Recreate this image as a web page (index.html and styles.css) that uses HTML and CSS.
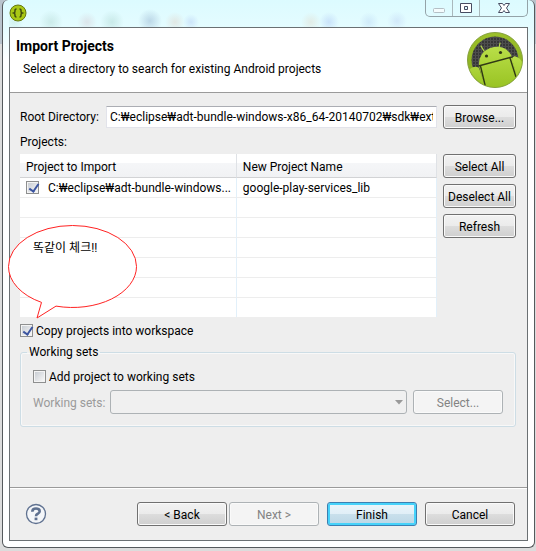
FILE: index.html
```html
<!DOCTYPE html>
<html lang="en">
<head>
  <meta charset="UTF-8" />
  <meta name="viewport" content="width=device-width, initial-scale=1.0" />
  <title>Import Projects</title>
  <link rel="stylesheet" href="styles.css">
</head>
<body>

  <div class="window">

    <!-- Title bar -->
    <div class="titlebar">
      <svg class="app-icon" width="18" height="18" viewBox="0 0 18 18">
        <circle cx="9" cy="9" r="8" fill="#a9c815" stroke="#66790f" stroke-width="1" />
        <path d="M7.5 5Q5.800 5 6 6.800Q6.200 8.500 4.800 9Q6.200 9.500 6 11.200Q5.800 13 7.500 13M10.500 5Q12.200 5 12 6.800Q11.800 8.500 13.200 9Q11.800 9.500 12 11.200Q12.200 13 10.500 13" fill="none" stroke="#3e4a10" stroke-width="1.500" />
      </svg>
      <div class="caption-buttons">
        <button class="caption" aria-label="Minimize">
          <svg width="14" height="14" viewBox="0 0 14 14"><rect x="1.5" y="7.5" width="11" height="4" rx="1" fill="#f4fcfd" stroke="#b4bfc5" /></svg>
        </button>
        <button class="caption" aria-label="Maximize">
          <svg width="14" height="14" viewBox="0 0 14 14"><path d="M1.500 2.500h11v9h-11zM5.500 5.500h3v3h-3z" fill="#fff" fill-rule="evenodd" stroke="#474b61" /></svg>
        </button>
        <button class="caption caption-close" aria-label="Close">
          <svg width="14" height="14" viewBox="0 0 14 14"><path d="M1.500 2.500h4L7 4.500l1.500-2h4L9.500 7l3 4.500h-4L7 9.500l-1.500 2h-4L4.500 7z" fill="#fff" stroke="#474b61" /></svg>
        </button>
      </div>
    </div>

    <div class="dialog">
      <div class="header">
        <div>
          <h1>Import Projects</h1>
          <p>Select a directory to search for existing Android projects</p>
        </div>
        <svg class="logo" width="58" height="58" viewBox="0 0 58 58">
          <defs>
            <linearGradient id="ring" x1="0" y1="0" x2="0" y2="1">
              <stop offset="0" stop-color="#9cc02a" />
              <stop offset="1" stop-color="#86ad1c" />
            </linearGradient>
            <linearGradient id="robot" x1="0" y1="0" x2="0" y2="1">
              <stop offset="0" stop-color="#b9df48" />
              <stop offset="1" stop-color="#98c222" />
            </linearGradient>
            <pattern id="mesh" width="3" height="3" patternUnits="userSpaceOnUse">
              <rect width="3" height="3" fill="#363636" />
              <rect width="1" height="3" fill="#505050" />
              <rect width="3" height="1" fill="#4c4c4c" />
            </pattern>
            <clipPath id="disc"><circle cx="29" cy="29" r="27" /></clipPath>
          </defs>
          <circle cx="29" cy="29" r="27.500" fill="url(#ring)" stroke="#86a03f" stroke-width="1" />
          <circle cx="29" cy="29" r="23.500" fill="url(#mesh)" />
          <g clip-path="url(#disc)">
            <path d="M13 35Q12 22 24 17Q40 12 46 26L54 58H19z" fill="url(#robot)" />
            <path d="M4 38Q9 34 13 37L20 58H4zM46 28Q47 24 51 26Q56 28 58 36L52 50z" fill="url(#robot)" />
            <path d="M12.500 35L46 26M14.500 35l5 21M44 27l6 19" fill="none" stroke="#303915" stroke-width="1.400" />
            <path d="M18 20l-3-5M33 17l1-5" stroke="#b6da49" stroke-width="1.200" stroke-linecap="round" />
            <circle cx="20.500" cy="25" r="1.600" fill="#303915" />
            <circle cx="34.500" cy="21.500" r="1.600" fill="#303915" />
          </g>
        </svg>
      </div>

      <div class="content">
        <div class="root-row">
          <label for="root-dir">Root Directory:</label>
          <input type="text" id="root-dir" class="text-box" value="C:₩eclipse₩adt-bundle-windows-x86_64-20140702₩sdk₩extras">
          <button class="button">Browse...</button>
        </div>

        <div class="projects-label">Projects:</div>
        <div class="projects-row">
          <div class="table-box">
            <table class="projects">
              <thead>
                <tr><th class="col-project">Project to Import</th><th>New Project Name</th></tr>
              </thead>
              <tbody>
                <tr>
                  <td><label class="check-label"><input type="checkbox" checked><span>C:₩eclipse₩adt-bundle-windows...</span></label></td>
                  <td>google-play-services_lib</td>
                </tr>
                <tr><td></td><td></td></tr>
                <tr><td></td><td></td></tr>
                <tr><td></td><td></td></tr>
                <tr><td></td><td></td></tr>
                <tr><td></td><td></td></tr>
                <tr><td></td><td></td></tr>
              </tbody>
            </table>

            <!-- speech bubble over the table -->
            <div class="bubble">
              <svg width="130" height="95" viewBox="0 0 130 95">
                <path d="M33.500 77.400A64 41 0 0 1 .5 41.500A64 41 0 0 1 64.500 .5A64 41 0 0 1 128.500 41.500A64 41 0 0 1 48 81.100L29 93z" fill="#fff" stroke="#f22" />
              </svg>
              <span lang="ko">똑같이 체크!!</span>
            </div>
          </div>
          <div class="side-buttons">
            <button class="button">Select All</button>
            <button class="button">Deselect All</button>
            <button class="button">Refresh</button>
          </div>
        </div>

        <label class="copy-row"><input type="checkbox" checked><span>Copy projects into workspace</span></label>

        <fieldset class="working-sets">
          <legend>Working sets</legend>
          <label class="add-row"><input type="checkbox"><span>Add project to working sets</span></label>
          <div class="sets-row">
            <label for="sets">Working sets:</label>
            <div class="combo">
              <select id="sets" disabled><option></option></select>
              <svg width="8" height="5" viewBox="0 0 8 5"><path d="M0 0h8L4 4.500z" fill="#999" /></svg>
            </div>
            <button class="button button-wide" disabled>Select...</button>
          </div>
        </fieldset>
      </div>

      <div class="footer">
        <button class="help" aria-label="Help">
          <svg width="22" height="22" viewBox="0 0 22 22">
            <circle cx="11" cy="11" r="9.500" fill="#f4f6f9" stroke="#5f7190" stroke-width="1.300" />
            <path d="M7.300 8.800Q7.300 5.500 11 5.500Q14.700 5.500 14.700 8.300Q14.700 9.800 12.700 10.800Q11 11.600 11 13.300" fill="none" stroke="#5f7190" stroke-width="2.600" />
            <rect x="9.600" y="14.600" width="2.800" height="2.600" fill="#5f7190" />
          </svg>
        </button>
        <div class="nav-buttons">
          <button class="button button-wide">&lt; Back</button>
          <button class="button button-wide" disabled>Next &gt;</button>
        </div>
        <button class="button button-wide button-default">Finish</button>
        <button class="button button-wide">Cancel</button>
      </div>
    </div>
  </div>

</body>
</html>
```

FILE: styles.css
```css
:root {
  --face: #eeeeee;
  --line: #9a9a9a;
  --frame: #6b7073;
}

* { box-sizing: border-box; }

body {
  margin: 0;
  padding: 0 1px 3px 2px;
  min-height: 100vh;
  display: flex;
  background: linear-gradient(to bottom, #b9c3cc 0, #b9c3cc 44px, #dcdcdc 44px);
  font-family: Roboto, "Noto Sans CJK KR", sans-serif;
  font-size: 12px;
  line-height: 18px;
  color: #000;
}

button, input, select {
  font: inherit;
  color: inherit;
}

.window {
  flex: 1;
  min-width: 0;
  display: flex;
  flex-direction: column;
  padding: 0 6px 6px;
  border: 1px solid #55595c;
  border-top: 0;
  border-radius: 6px;
  background: linear-gradient(to bottom, #dcfbff 0, #e4fcff 27px, #fff 60px);
}

/* title bar */
.titlebar {
  height: 27px;
  display: flex;
  justify-content: space-between;
  align-items: flex-start;
  /* blurred toolbar behind the glass */
  background:
    radial-gradient(circle at 5px 22px, #b5e0d460 0, transparent 10px),
    radial-gradient(circle at 42px 22px, #a5cfc660 0, transparent 12px),
    radial-gradient(circle at 78px 22px, #d0bfc860 0, transparent 10px),
    radial-gradient(circle at 103px 22px, #9fccc460 0, transparent 12px),
    radial-gradient(circle at 141px 21px, #7d9cc060 0, transparent 12px),
    radial-gradient(circle at 166px 22px, #dfc7b860 0, transparent 10px),
    radial-gradient(circle at 182px 22px, #a9bff060 0, transparent 8px),
    radial-gradient(circle at 302px 22px, #e0d2be60 0, transparent 10px),
    radial-gradient(circle at 320px 22px, #9fb8f060 0, transparent 10px),
    radial-gradient(circle at 360px 22px, #b0cdf060 0, transparent 10px),
    radial-gradient(circle at 388px 21px, #b5c8f060 0, transparent 10px);
}
.app-icon { margin: 4px 0 0; }
.caption-buttons {
  display: flex;
  border: 1px solid #94a3a8;
  border-top: 0;
  border-radius: 0 0 5px 5px;
}
.caption {
  display: flex;
  justify-content: center;
  align-items: center;
  width: 27px;
  height: 16px;
  padding: 0;
  border: 0;
  border-right: 1px solid #a9b8bc;
  background: transparent;
}
.caption-close {
  width: 47px;
  border-right: 0;
}

.dialog {
  flex: 1;
  display: flex;
  flex-direction: column;
  border: 1px solid var(--frame);
  background: var(--face);
}

.header {
  display: flex;
  justify-content: space-between;
  height: 65px;
  padding: 3px 3px 0 6px;
  border-bottom: 1px solid var(--line);
  background: #fff;
}
.header h1 {
  margin: 6px 0 5px;
  font-size: 14px;
  line-height: 18px;
}
.header p { margin: 0 0 0 7px; }

.content {
  flex: 1;
  padding: 12px 11px 0 10px;
}

.button {
  width: 73px;
  height: 24px;
  padding: 1px 0 0;
  border: 1px solid #707070;
  border-radius: 3px;
  box-shadow: inset 0 0 0 1px #fafafa;
  background: linear-gradient(to bottom, #f2f2f2 0, #ebebeb 50%, #dddddd 50%, #cfcfcf 100%);
  white-space: nowrap;
}
.button-wide { width: 90px; }
.button:disabled {
  border-color: #adb2b5;
  background: #f4f4f4;
  color: #838383;
}
.button-default {
  border-color: #3c7fb1;
  box-shadow: inset 0 0 0 2px #46d2fa;
  background: linear-gradient(to bottom, #ecf5fa 0, #e0eff7 50%, #c9e0ec 50%, #bbd7e6 100%);
}

.root-row {
  display: flex;
  align-items: center;
  gap: 6px;
}
.root-row label {
  width: 80px;
  white-space: nowrap;
}
.text-box {
  flex: 1;
  min-width: 0;
  height: 22px;
  padding: 0 3px;
  border: 1px solid #e2e3ea;
  border-top-color: #abadb3;
  background: #fff;
}

.projects-label { margin: 4px 0 3px; }
.projects-row {
  display: flex;
  gap: 6px;
}
.table-box {
  position: relative;
  flex: 1;
}
.projects {
  width: 100%;
  table-layout: fixed;
  border-collapse: separate;
  border-spacing: 0;
  background: #fff;
}
.projects th {
  height: 24px;
  padding: 2px 6px 0;
  border-right: 1px solid #dfe2e6;
  border-bottom: 1px solid #d2d3d5;
  background: linear-gradient(to bottom, #fff 0, #fff 40%, #f5f6f8 40%, #f1f2f4 100%);
  font-weight: normal;
  text-align: left;
}
.projects .col-project { width: 52%; }
.projects td {
  height: 20px;
  padding: 0 6px;
  border-right: 1px solid #e2f0fa;
  border-bottom: 1px solid #ededed;
  white-space: nowrap;
}
.projects tr:last-child td {
  height: 19px;
  border-bottom: 0;
}
.check-label {
  display: flex;
  align-items: center;
  gap: 9px;
}

input[type="checkbox"] {
  appearance: none;
  position: relative;
  flex: none;
  width: 13px;
  height: 13px;
  margin: 0;
  border: 1px solid #8e8f8f;
  box-shadow: inset 0 0 0 1px #f4f4f4;
  background: linear-gradient(135deg, #c4c9d0 0, #f6f6f6 90%);
}
input[type="checkbox"]:checked::before {
  content: "";
  position: absolute;
  left: 4px;
  top: 0;
  width: 4px;
  height: 8px;
  border: solid #3c55a0;
  border-width: 0 2px 2px 0;
  transform: rotate(35deg);
}

.side-buttons {
  display: flex;
  flex-direction: column;
  gap: 6px;
}

.bubble {
  position: absolute;
  left: -12px;
  top: 71px;
}
.bubble svg { display: block; }
.bubble span {
  position: absolute;
  left: 25px;
  top: 14px;
  white-space: nowrap;
}

.copy-row, .add-row {
  display: flex;
  align-items: center;
  gap: 3px;
}
.copy-row { margin-top: 4px; }
.copy-row span, .add-row span { padding-top: 1px; }

.working-sets {
  margin: 3px 0 0;
  padding: 6px 12px 12px;
  border: 1px solid #cddde5;
  border-radius: 3px;
  box-shadow: inset 0 0 0 1px #f8f8f8;
}
.working-sets legend {
  margin-left: -6px;
  padding: 0 2px;
}
.sets-row {
  display: flex;
  align-items: center;
  gap: 6px;
  margin-top: 4px;
}
.sets-row label {
  width: 71px;
  padding-top: 1px;
  color: #9a9a9a;
  white-space: nowrap;
}
.combo {
  position: relative;
  flex: 1;
}
.combo select {
  display: block;
  appearance: none;
  width: 100%;
  height: 24px;
  border: 1px solid #adb2b5;
  border-radius: 3px;
  background: #f0f0f0;
  opacity: 1;
}
.combo svg {
  position: absolute;
  right: 4px;
  top: 10px;
}

.footer {
  display: flex;
  align-items: center;
  gap: 8px;
  height: 53px;
  padding: 0 12px 0 15px;
  border-top: 1px solid var(--line);
  box-shadow: inset 0 1px 0 #fff;
}
.help {
  display: flex;
  margin-right: auto;
  padding: 0;
  border: 0;
  background: transparent;
}
.nav-buttons {
  display: flex;
  gap: 2px;
}
```
